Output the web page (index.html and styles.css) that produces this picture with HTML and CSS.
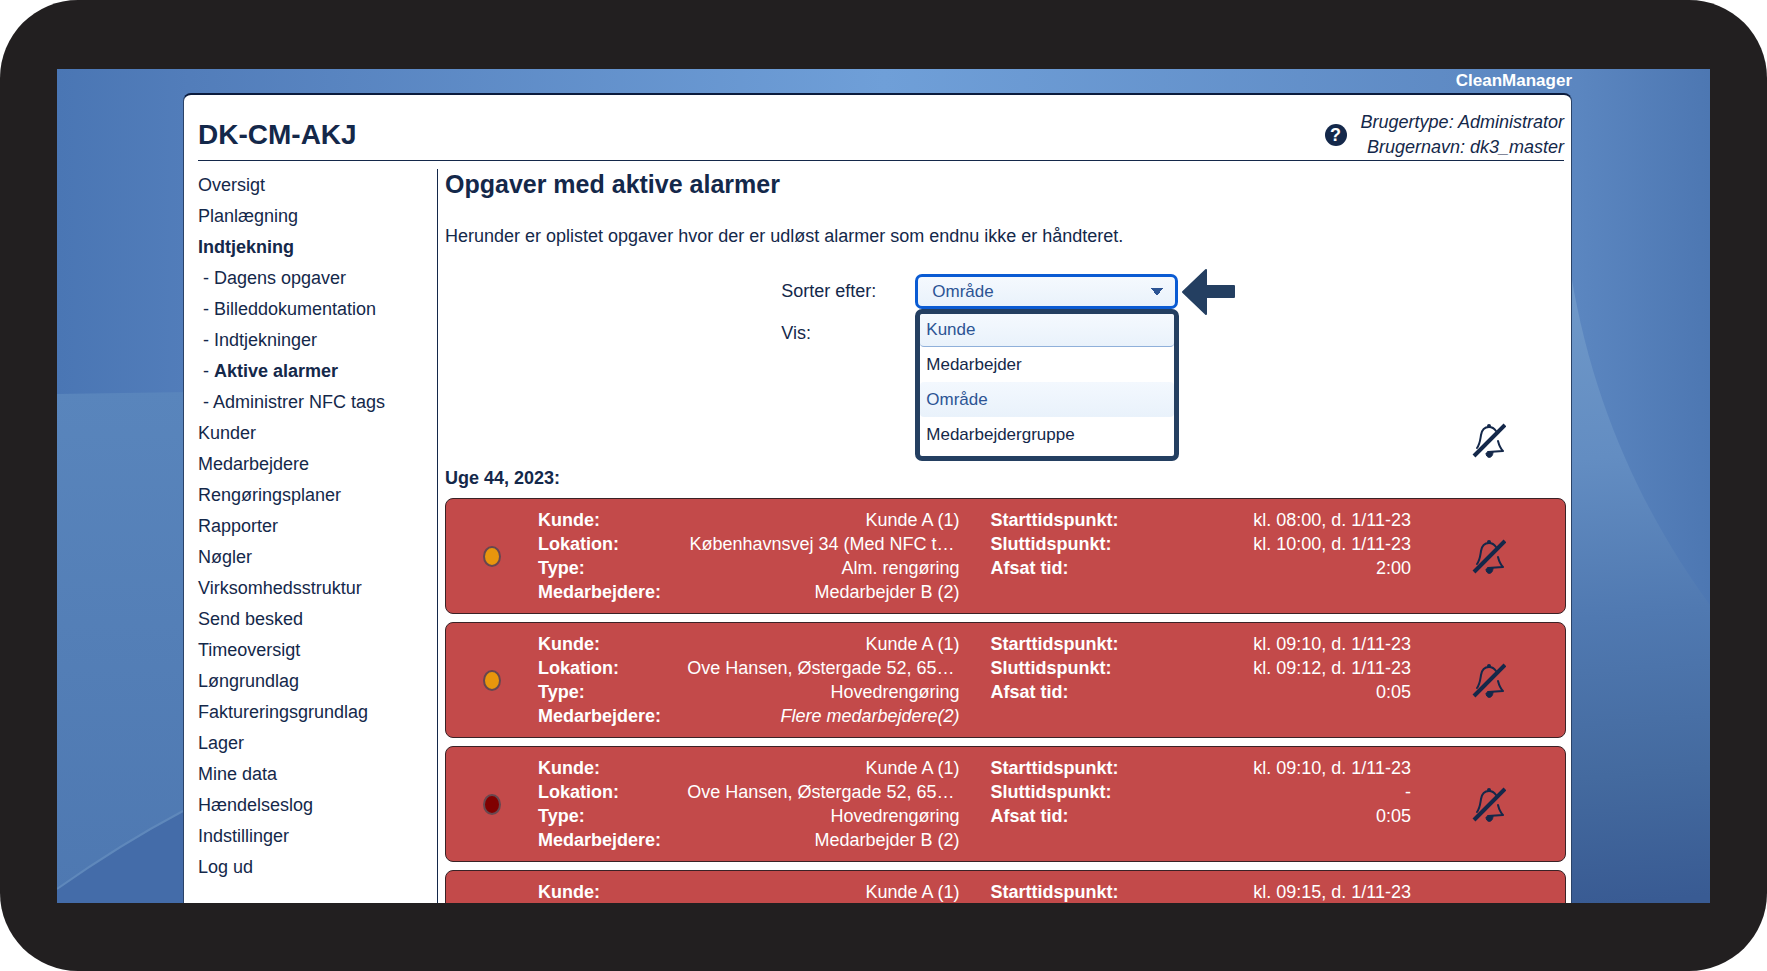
FILE: index.html
```
<!DOCTYPE html>
<html lang="da">
    <head>
        <title>CleanManager - Aktive alarmer</title>
        <meta charset="UTF-8">
        <meta name="viewport" content="width=device-width, initial-scale=1.0">
        <link rel="stylesheet" href="styles.css">
    </head>
    <body>
        <!-- shared icon -->
        <svg class="defs" width="0" height="0" aria-hidden="true">
            <symbol id="bell" viewBox="0 0 35 35">
                <g fill="none" stroke="#14284a" stroke-width="2" stroke-linejoin="round" stroke-linecap="round">
                    <path d="M6 25 C9 21 9 18 10 12 C11 6 14 4 18 4 C21 4 23 5 25 8"/>
                    <path d="M27 18 C28 22 29 25 32 28 L17 29"/>
                    <path d="M3 33 L34 2" stroke-width="4" stroke-linecap="butt"/>
                </g>
                <circle cx="18" cy="3" r="2" fill="#14284a"/>
                <path d="M15 30 L22 29 C22 36 15 36 15 30 Z" fill="#14284a" stroke="#14284a"/>
            </symbol>
        </svg>

        <div class="device">
            <div class="screen">
                <svg class="wallpaper" viewBox="0 0 1653 834" preserveAspectRatio="none" aria-hidden="true">
                    <defs>
                        <linearGradient id="sky" x1="0" y1="0" x2="1" y2="0">
                            <stop offset="0" stop-color="#4a76b4"/>
                            <stop offset="0.08" stop-color="#527dba"/>
                            <stop offset="0.5" stop-color="#6f9fd8"/>
                            <stop offset="0.92" stop-color="#5b86c0"/>
                            <stop offset="1" stop-color="#4d77b2"/>
                        </linearGradient>
                        <linearGradient id="left" x1="0" y1="0" x2="0" y2="1">
                            <stop offset="0" stop-color="#5985bc"/>
                            <stop offset="1" stop-color="#4e78b1"/>
                        </linearGradient>
                        <linearGradient id="right" gradientUnits="userSpaceOnUse" x1="1510" y1="200" x2="1560" y2="834">
                            <stop offset="0" stop-color="#7099c9"/>
                            <stop offset="0.3" stop-color="#638dc2"/>
                            <stop offset="0.55" stop-color="#5079b1"/>
                            <stop offset="0.8" stop-color="#446a9f"/>
                            <stop offset="1" stop-color="#395b93"/>
                        </linearGradient>
                    </defs>
                    <rect width="1653" height="834" fill="url(#sky)"/>
                    <path d="M0 325 L400 319 V834 H0 Z" fill="url(#left)"/>
                    <path d="M0 820 Q62 776 126 742 L400 600 V834 H0 Z" fill="#446ca9"/>
                    <path d="M0 820 Q62 776 126 742" fill="none" stroke="#5f88bb" stroke-width="2"/>
                    <path d="M1500 170 L1514 205 C1536 340 1590 450 1653 536 V834 H1500 Z" fill="url(#right)"/>
                </svg>

                <div class="page">
                    <div class="brand">CleanManager</div>
                    <div class="panel">
                        <header class="top">
                            <div class="company">DK-CM-AKJ</div>
                            <div class="user">
                                <a href="#" class="help" aria-label="Hjælp">?</a>
                                <div class="userinfo">
                                    <div>Brugertype: Administrator</div>
                                    <div>Brugernavn: dk3_master</div>
                                </div>
                            </div>
                        </header>

                        <div class="columns">
                            <nav class="menu">
                                <a href="#">Oversigt</a>
                                <a href="#">Planlægning</a>
                                <a href="#" class="current">Indtjekning</a>
                                <div class="submenu">
                                    <a href="#">Dagens opgaver</a>
                                    <a href="#">Billeddokumentation</a>
                                    <a href="#">Indtjekninger</a>
                                    <a href="#" class="current">Aktive alarmer</a>
                                    <a href="#">Administrer NFC tags</a>
                                </div>
                                <a href="#">Kunder</a>
                                <a href="#">Medarbejdere</a>
                                <a href="#">Rengøringsplaner</a>
                                <a href="#">Rapporter</a>
                                <a href="#">Nøgler</a>
                                <a href="#">Virksomhedsstruktur</a>
                                <a href="#">Send besked</a>
                                <a href="#">Timeoversigt</a>
                                <a href="#">Løngrundlag</a>
                                <a href="#">Faktureringsgrundlag</a>
                                <a href="#">Lager</a>
                                <a href="#">Mine data</a>
                                <a href="#">Hændelseslog</a>
                                <a href="#">Indstillinger</a>
                                <a href="#">Log ud</a>
                            </nav>

                            <main class="content">
                                <h1>Opgaver med aktive alarmer</h1>
                                <p>Herunder er oplistet opgaver hvor der er udløst alarmer som endnu ikke er håndteret.</p>

                                <div class="filters">
                                    <label for="sort">Sorter efter:</label>
                                    <div class="sort">
                                        <select id="sort">
                                            <option>Kunde</option>
                                            <option>Medarbejder</option>
                                            <option selected>Område</option>
                                            <option>Medarbejdergruppe</option>
                                        </select>
                                        <svg class="pointer" viewBox="0 0 56 48" aria-hidden="true">
                                            <path d="M2 24 L25 2 V18 H53 V29 H25 V46 Z" fill="#243f61" stroke="#243f61" stroke-width="2" stroke-linejoin="round"/>
                                        </svg>
                                        <ul class="options">
                                            <li><button type="button" class="first">Kunde</button></li>
                                            <li><button type="button">Medarbejder</button></li>
                                            <li><button type="button" class="selected">Område</button></li>
                                            <li><button type="button">Medarbejdergruppe</button></li>
                                        </ul>
                                    </div>
                                    <div>Vis:</div>
                                </div>

                                <div class="muteall">
                                    <button type="button" class="mute" aria-label="Slå alle alarmer fra"><svg><use href="#bell"/></svg></button>
                                </div>

                                <h2>Uge 44, 2023:</h2>

                                <div class="task">
                                    <span class="dot"></span>
                                    <dl>
                                        <div><dt>Kunde:</dt><dd>Kunde A (1)</dd></div>
                                        <div><dt>Lokation:</dt><dd>Københavnsvej 34 (Med NFC t…&nbsp;</dd></div>
                                        <div><dt>Type:</dt><dd>Alm. rengøring</dd></div>
                                        <div><dt>Medarbejdere:</dt><dd>Medarbejder B (2)</dd></div>
                                    </dl>
                                    <dl>
                                        <div><dt>Starttidspunkt:</dt><dd>kl. 08:00, d. 1/11-23</dd></div>
                                        <div><dt>Sluttidspunkt:</dt><dd>kl. 10:00, d. 1/11-23</dd></div>
                                        <div><dt>Afsat tid:</dt><dd>2:00</dd></div>
                                    </dl>
                                    <button type="button" class="mute" aria-label="Slå alarm fra"><svg><use href="#bell"/></svg></button>
                                </div>

                                <div class="task">
                                    <span class="dot"></span>
                                    <dl>
                                        <div><dt>Kunde:</dt><dd>Kunde A (1)</dd></div>
                                        <div><dt>Lokation:</dt><dd>Ove Hansen, Østergade 52, 65…&nbsp;</dd></div>
                                        <div><dt>Type:</dt><dd>Hovedrengøring</dd></div>
                                        <div><dt>Medarbejdere:</dt><dd><i>Flere medarbejdere(2)</i></dd></div>
                                    </dl>
                                    <dl>
                                        <div><dt>Starttidspunkt:</dt><dd>kl. 09:10, d. 1/11-23</dd></div>
                                        <div><dt>Sluttidspunkt:</dt><dd>kl. 09:12, d. 1/11-23</dd></div>
                                        <div><dt>Afsat tid:</dt><dd>0:05</dd></div>
                                    </dl>
                                    <button type="button" class="mute" aria-label="Slå alarm fra"><svg><use href="#bell"/></svg></button>
                                </div>

                                <div class="task">
                                    <span class="dot late"></span>
                                    <dl>
                                        <div><dt>Kunde:</dt><dd>Kunde A (1)</dd></div>
                                        <div><dt>Lokation:</dt><dd>Ove Hansen, Østergade 52, 65…&nbsp;</dd></div>
                                        <div><dt>Type:</dt><dd>Hovedrengøring</dd></div>
                                        <div><dt>Medarbejdere:</dt><dd>Medarbejder B (2)</dd></div>
                                    </dl>
                                    <dl>
                                        <div><dt>Starttidspunkt:</dt><dd>kl. 09:10, d. 1/11-23</dd></div>
                                        <div><dt>Sluttidspunkt:</dt><dd>-</dd></div>
                                        <div><dt>Afsat tid:</dt><dd>0:05</dd></div>
                                    </dl>
                                    <button type="button" class="mute" aria-label="Slå alarm fra"><svg><use href="#bell"/></svg></button>
                                </div>

                                <div class="task">
                                    <span></span>
                                    <dl>
                                        <div><dt>Kunde:</dt><dd>Kunde A (1)</dd></div>
                                    </dl>
                                    <dl>
                                        <div><dt>Starttidspunkt:</dt><dd>kl. 09:15, d. 1/11-23</dd></div>
                                    </dl>
                                </div>
                            </main>
                        </div>
                    </div>
                </div>
            </div>
        </div>
    </body>
</html>
```

FILE: styles.css
```
*{
    box-sizing: border-box;
}
body{
    margin: 0;
    background: white;
    color: #14284a;
    font-family: "Liberation Sans", Arial, sans-serif;
    font-size: 18px;
    line-height: 24px;
}
a{
    color: inherit;
    text-decoration: none;
}
button, select{
    font-family: inherit;
    cursor: pointer;
}
.defs{
    position: absolute;
}

/* tablet frame */
.device{
    display: flex;
    height: 100vh;
    padding: 69px 57px 68px;
    background: #221f20;
    border-radius: 78px;
}
.screen{
    position: relative;
    flex: 1;
    display: flex;
    overflow: hidden;
}
.wallpaper{
    position: absolute;
    top: 0;
    left: 0;
    width: 100%;
    height: 100%;
}
.page{
    position: relative;
    flex: 1;
    display: flex;
    flex-direction: column;
    margin: 0 138px 0 126px;
}
.brand{
    color: white;
    font-size: 17px;
    font-weight: bold;
    text-align: right;
}
.panel{
    flex: 1 0 auto;
    display: flex;
    flex-direction: column;
    padding: 0 7px 0 14px;
    background: white;
    border: 1px solid #2b4368;
    border-top: 2px solid #0b1b3c;
    border-bottom: 0;
    border-radius: 8px 8px 0 0;
}

/* header */
.top{
    display: flex;
    justify-content: space-between;
    align-items: center;
    padding-top: 15px;
    border-bottom: 1px solid #14284a;
}
.company{
    font-size: 28px;
    line-height: 36px;
    font-weight: bold;
}
.user{
    display: flex;
    align-items: center;
    gap: 14px;
}
.userinfo{
    font-style: italic;
    line-height: 25px;
    text-align: right;
}
.help{
    width: 22px;
    height: 22px;
    border-radius: 50%;
    background: #14284a;
    color: white;
    font-weight: bold;
    line-height: 22px;
    text-align: center;
}

/* menu and content */
.columns{
    flex: 1;
    display: flex;
    padding-top: 8px;
}
.menu{
    width: 240px;
    padding-top: 1px;
    border-right: 1px solid #14284a;
    line-height: 31px;
}
.menu a{
    display: block;
}
.submenu{
    padding-left: 5px;
}
.submenu a:before{
    content: "- ";
    font-weight: normal;
}
.current{
    font-weight: bold;
}
.content{
    flex: 1;
    min-width: 0;
    margin-left: 7px;
    margin-right: -2px;
}
h1{
    margin: 0 0 25px;
    font-size: 25px;
    line-height: 30px;
}
h2{
    margin: 8px 0;
    font-size: 18px;
    line-height: 24px;
}
p{
    margin: 0 0 26px;
}

/* sorting */
.filters{
    display: grid;
    grid-template-columns: 134px 1fr;
    grid-auto-rows: 35px;
    row-gap: 7px;
    padding-left: 30%;
    line-height: 35px;
}
.sort{
    position: relative;
    display: flex;
    align-items: center;
    gap: 3px;
}
.sort select{
    width: 263px;
    height: 35px;
    padding: 0 14px;
    appearance: none;
    color: #2c5494;
    font-size: 17px;
    border: 3px solid #0a5bd3;
    border-radius: 7px;
    background-image: linear-gradient(to bottom right, #2c5494 50%, transparent 50%), linear-gradient(to bottom left, #2c5494 50%, transparent 50%), linear-gradient(#f5f9fe, #e9f2fb);
    background-size: 6px 8px, 6px 8px, 100% 100%;
    background-position: right 12px center, right 18px center, 0 0;
    background-repeat: no-repeat;
}
.pointer{
    width: 56px;
    height: 48px;
}
.options{
    position: absolute;
    top: 35px;
    left: 0;
    z-index: 1;
    width: 264px;
    margin: 0;
    padding: 0 0 4px;
    list-style: none;
    background: white;
    border: 5px solid #243f61;
    border-radius: 7px;
}
.options button{
    display: block;
    width: 100%;
    height: 35px;
    padding: 0 6px;
    border: 0;
    border-radius: 4px;
    background: white;
    color: #14284a;
    font-size: 17px;
    text-align: left;
}
.options .first{
    height: 33px;
    color: #2c5494;
    background: linear-gradient(#f5f9fe, #e9f2fb);
    border-bottom: 1px solid #8fb0da;
}
.options .selected{
    color: #2c5494;
    background: linear-gradient(#f3f8fe, #e9f2fb);
}

/* tasks */
.mute{
    padding: 0;
    border: 0;
    background: none;
}
.mute svg{
    display: block;
    width: 35px;
    height: 35px;
    margin: 0 auto;
}
.muteall{
    display: flex;
    justify-content: flex-end;
    margin-top: 72px;
}
.muteall .mute{
    width: 156px;
}
.task{
    display: grid;
    grid-template-columns: 92px 1fr 1fr 154px;
    align-items: center;
    margin-bottom: 8px;
    padding: 9px 0;
    color: white;
    background: #c34a4a;
    border: 1px solid #3a2226;
    border-radius: 8px;
}
.task dl{
    align-self: start;
    margin: 0;
}
.task dl + dl{
    margin-left: 16px;
}
.task dl:first-of-type{
    margin-right: 15px;
}
.task dl div{
    display: flex;
    justify-content: space-between;
}
.task dt{
    font-weight: bold;
}
.task dd{
    margin: 0;
    white-space: nowrap;
}
.dot{
    width: 18px;
    height: 21px;
    margin: 0 auto;
    border: 2px solid #67474f;
    border-radius: 50%;
    background: #e8960c;
}
.late{
    background: #800000;
}
```
